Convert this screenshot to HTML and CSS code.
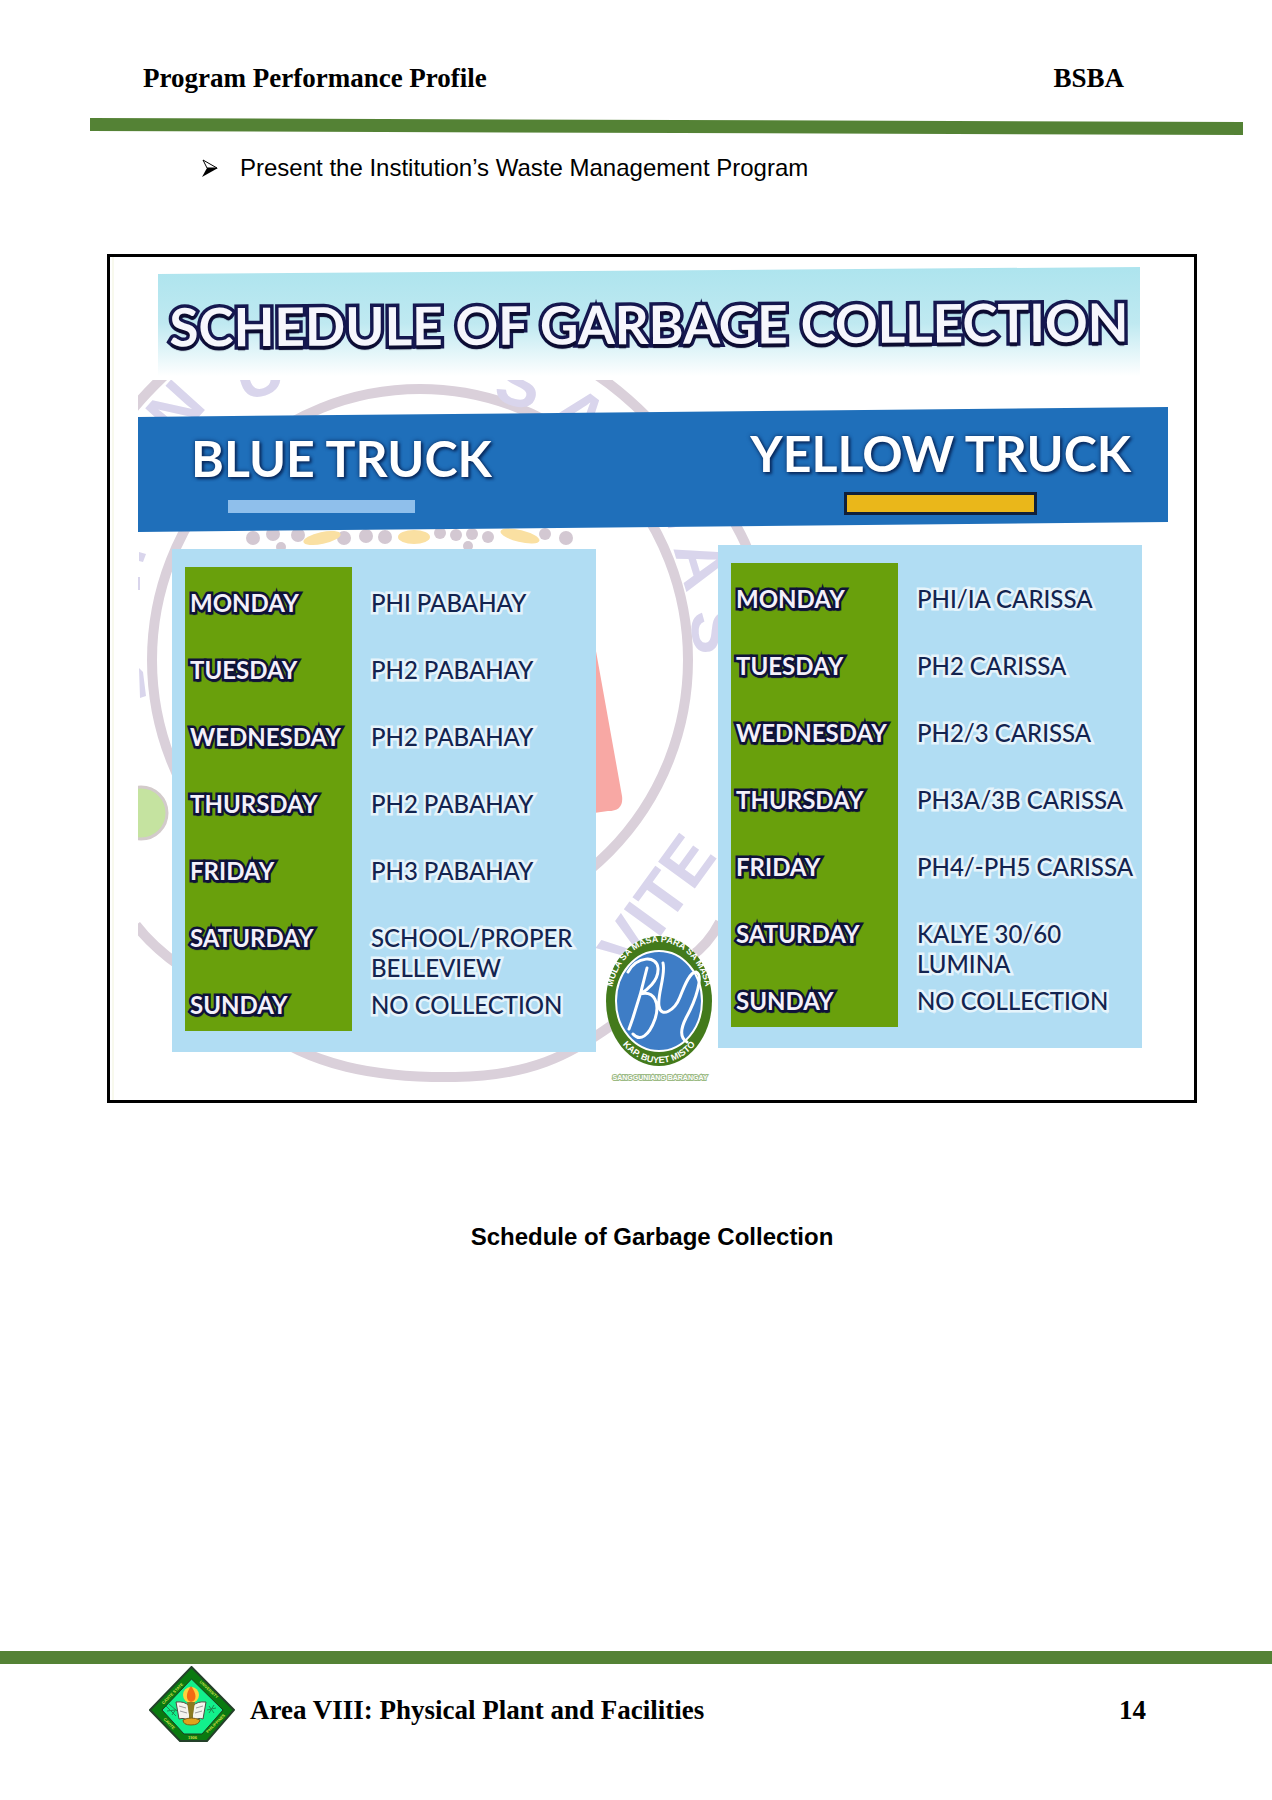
FILE: index.html
```html
<!DOCTYPE html>
<html lang="en">
<head>
<meta charset="utf-8">
<title>Program Performance Profile – BSBA</title>
<link rel="stylesheet" href="styles.css">
</head>
<body>
<header class="page-head">
  <span>Program Performance Profile</span>
  <span>BSBA</span>
</header>
<div class="head-rule"></div>

<main class="content">
  <ul class="topics">
    <li class="topic">
      <svg class="arrow" viewBox="0 0 16 18" aria-hidden="true"><path d="M1 1 15 9H5z" fill="#fff" stroke="#000" stroke-width="1"/><path d="M5 9H16L0 18z"/></svg>
      Present the Institution’s Waste Management Program
    </li>
  </ul>

  <figure class="figure">
    <div class="poster">
      <svg class="seal" viewBox="110 257 1084 843" preserveAspectRatio="none" aria-hidden="true">
        <defs>
          <clipPath id="art"><rect x="138" y="380" width="1030" height="710"/></clipPath>
          <path id="arcTop" d="M611 1001a48 59 0 0 1 96 0"/>
          <path id="arcBottom" d="M608 1001a51 62 0 0 0 102 0"/>
        </defs>
        <path d="M113 257V1100" stroke="#f1f3dc" stroke-width="1"/>
        <g clip-path="url(#art)">
          <g fill="none" stroke="#dad0da" stroke-width="10">
            <ellipse cx="420" cy="660" rx="268" ry="271"/>
            <path d="M128 415Q143 396 165 375M592 372Q618 388 648 418M730 515Q742 535 748 550M136 925Q152 946 180 966M250 1020C310 1068 380 1078 455 1077S570 1055 612 1025M690 957Q708 945 720 922"/>
          </g>
          <g class="seal-text">
            <text transform="translate(176 442) rotate(-48)">N</text>
            <text transform="translate(243 402) rotate(-18)">U</text>
            <text transform="translate(492 400) rotate(14)">S</text>
            <text transform="translate(548 418) rotate(38)">A</text>
            <text transform="translate(655 505) rotate(60)">V</text>
            <text transform="translate(673 548) rotate(73)">A</text>
            <text transform="translate(690 612) rotate(84)">S</text>
            <text transform="translate(632 975) rotate(-54)">VITE</text>
          </g>
          <path d="M139 552 146 554 143 562 139 561zM138 577H140V590H138zM139 668 143 672 146 696 140 698z" fill="#d9d5ec"/>
          <g fill="#d3c8d2">
            <circle cx="253" cy="538" r="7"/><circle cx="273" cy="534" r="7"/><circle cx="298" cy="535" r="7"/><circle cx="344" cy="538" r="7"/><circle cx="366" cy="536" r="7"/><circle cx="385" cy="537" r="7"/><circle cx="440" cy="533" r="6"/><circle cx="456" cy="535" r="6"/><circle cx="472" cy="534" r="6"/><circle cx="488" cy="537" r="6"/><circle cx="468" cy="546" r="5"/><circle cx="545" cy="534" r="6"/><circle cx="566" cy="538" r="7"/><circle cx="281" cy="547" r="5"/>
          </g>
          <g fill="#fae0a2">
            <ellipse cx="322" cy="538" rx="19" ry="6" transform="rotate(-12 322 538)"/><ellipse cx="414" cy="537" rx="16" ry="7"/><ellipse cx="520" cy="536" rx="20" ry="6" transform="rotate(14 520 536)"/>
          </g>
          <circle cx="141" cy="813" r="26" fill="#c5e3a0" stroke="#d3cbcb" stroke-width="3"/>
          <path d="M594 640 622 796Q624 811 608 811L594 813z" fill="#f8a8a4"/>
        </g>
        <ellipse cx="659" cy="1001" rx="53" ry="65" fill="#437a1b"/>
        <ellipse cx="659" cy="1001" rx="43" ry="50" fill="#3e7dc6" stroke="#fff" stroke-width="2"/>
        <path d="M647 968C642 990 636 1010 629 1029M628 972C637 956 657 955 658 968C659 981 646 991 640 994C655 990 660 1004 655 1019C649 1036 640 1042 633 1034M663 963C666 975 657 995 659 1006C661 1019 675 1010 680 997C685 984 690 972 696 972C704 975 696 1000 686 1018C680 1030 680 1038 687 1042" fill="none" stroke="#fff" stroke-width="3" stroke-linecap="round"/>
        <text class="ring-text"><textPath href="#arcTop" startOffset="50%" text-anchor="middle">MULA SA MASA PARA SA MASA</textPath></text>
        <text class="ring-text"><textPath href="#arcBottom" startOffset="50%" text-anchor="middle">KAP. BUYET MISTO</textPath></text>
        <text class="logo-caption" x="660" y="1080" text-anchor="middle">SANGGUNIANG BARANGAY</text>
      </svg>

      <h1 class="title"><span>SCHEDULE OF GARBAGE COLLECTION</span></h1>

      <div class="band">
        <h2 class="truck truck-blue">BLUE TRUCK</h2>
        <h2 class="truck truck-yellow">YELLOW TRUCK</h2>
      </div>

      <div class="panels">
        <table class="panel panel-low">
          <tbody>
            <tr><th scope="row">MONDAY</th><td>PHI PABAHAY</td></tr>
            <tr><th scope="row">TUESDAY</th><td>PH2 PABAHAY</td></tr>
            <tr><th scope="row">WEDNESDAY</th><td>PH2 PABAHAY</td></tr>
            <tr><th scope="row">THURSDAY</th><td>PH2 PABAHAY</td></tr>
            <tr><th scope="row">FRIDAY</th><td>PH3 PABAHAY</td></tr>
            <tr><th scope="row">SATURDAY</th><td>SCHOOL/PROPER<br>BELLEVIEW</td></tr>
            <tr><th scope="row">SUNDAY</th><td>NO COLLECTION</td></tr>
          </tbody>
        </table>
        <table class="panel">
          <tbody>
            <tr><th scope="row">MONDAY</th><td>PHI/IA CARISSA</td></tr>
            <tr><th scope="row">TUESDAY</th><td>PH2 CARISSA</td></tr>
            <tr><th scope="row">WEDNESDAY</th><td>PH2/3 CARISSA</td></tr>
            <tr><th scope="row">THURSDAY</th><td>PH3A/3B CARISSA</td></tr>
            <tr><th scope="row">FRIDAY</th><td>PH4/-PH5 CARISSA</td></tr>
            <tr><th scope="row">SATURDAY</th><td>KALYE 30/60<br>LUMINA</td></tr>
            <tr><th scope="row">SUNDAY</th><td>NO COLLECTION</td></tr>
          </tbody>
        </table>
      </div>
    </div>
    <figcaption class="caption">Schedule of Garbage Collection</figcaption>
  </figure>
</main>

<footer class="page-foot">
  <svg class="crest" viewBox="0 0 86 76" aria-hidden="true">
    <defs>
      <path id="e1" d="M11 42 42 11"/><path id="e2" d="M46 12 78 43"/><path id="e3" d="M10 49 32 72"/><path id="e4" d="M56 70 80 46"/>
    </defs>
    <path d="M42.500 1 85 44 58 75H31L1 44z" fill="#0a7a10" stroke="#24402a" stroke-width="2"/>
    <path d="M42.500 13 74 44 53 68H35L13 44z" fill="#12f08c" stroke="#1c3a20" stroke-width="1"/>
    <g class="crest-text">
      <text><textPath href="#e1" startOffset="5">CAVITE STATE</textPath></text>
      <text><textPath href="#e2" startOffset="6">UNIVERSITY</textPath></text>
      <text><textPath href="#e3" startOffset="6">CAVITE</textPath></text>
      <text><textPath href="#e4" startOffset="4">PHILIPPINES</textPath></text>
      <text x="39" y="73">1906</text>
    </g>
    <circle cx="42" cy="29" r="8" fill="#ffd23c"/>
    <path d="M42 20C36 28 37 35 42 36C48 35 48 28 42 20z" fill="#f26a14"/>
    <path d="M27 36Q36 35 40 40L41 56Q36 51 30 53zM57 36Q48 35 44 40L43 56Q49 51 54 53z" fill="#f4f4ee" stroke="#4c4c40" stroke-width="1"/>
    <path d="M30 40 37 42M31 45 38 47M47 42 54 40M46 47 53 45" stroke="#9a9a9a" stroke-width="1"/>
    <path d="M38 36H46L43 55H41z" fill="#8a7a20"/>
    <path d="M34 54Q42 50 51 54 50 59 42 59T34 54z" fill="#e0a21c" stroke="#806010" stroke-width="1"/>
    <path d="M17 40 27 50M20 38 28 45M18 45 26 44M23 49 27 43M58 44 67 42M60 40 65 47M65 39 60 47" stroke="#1d8a50" stroke-width="1" fill="none"/>
  </svg>
  <span>Area VIII: Physical Plant and Facilities</span>
  <span class="page-no">14</span>
</footer>
</body>
</html>
```
FILE: styles.css
```css
* { box-sizing: border-box; }

body {
  margin: 0;
  min-height: 100vh;
  display: flex;
  flex-direction: column;
  background: #fff;
  color: #000;
  font-family: "Liberation Sans", Arial, sans-serif;
  font-size: 24px;
  line-height: 32px;
}

.page-head {
  display: flex;
  justify-content: space-between;
  padding: 62px 148px 0 143px;
  font-family: "Palatino Linotype", "Liberation Serif", serif;
  font-size: 27px;
  font-weight: bold;
}

.head-rule {
  height: 17px;
  margin: 24px 29px 0 90px;
  background: #548235;
  clip-path: polygon(0 0, 100% 4px, 100% 100%, 0 13px);
}

.content {
  flex: 1;
  padding: 17px 75px 0 107px;
}

.topics {
  margin: 0;
  padding: 0 0 0 95px;
  list-style: none;
}

.topic {
  display: flex;
  align-items: center;
  gap: 22px;
}

.arrow {
  width: 16px;
  height: 18px;
}

.figure {
  margin: 70px 0 0;
}

.poster {
  position: relative;
  border: 3px solid #000;
  padding-bottom: 48px;
  font-family: Lato, sans-serif;
}

.seal {
  position: absolute;
  inset: 0;
  width: 100%;
  height: 100%;
}

.seal-text {
  fill: #d9d5ec;
  font: bold 66px "Liberation Sans", sans-serif;
}

.ring-text {
  fill: #fff;
  font: bold 9px "Liberation Sans", sans-serif;
}

.logo-caption {
  fill: #fff;
  stroke: #9cba84;
  stroke-width: 2px;
  paint-order: stroke;
  font: bold 7px "Liberation Sans", sans-serif;
}

.title {
  position: relative;
  height: 140px;
  margin: 10px 54px 0 48px;
  padding-top: 17px;
  background: linear-gradient(#ade4ee, #bfe9f1 40%, #fff0 78%);
  clip-path: polygon(0 7px, 100% 0, 100% 100%, 0 100%);
  color: #f6f6fc;
  font-size: 53px;
  line-height: 80px;
  text-align: center;
  white-space: nowrap;
  -webkit-text-stroke: 7px #15174f;
  paint-order: stroke fill;
  text-shadow: 0 4px 1px #0c0c30;
}

.title span {
  display: block;
  transform: rotate(-0.3deg);
}

.band {
  position: relative;
  display: flex;
  justify-content: space-between;
  align-items: flex-start;
  height: 125px;
  margin: 0 26px 0 28px;
  padding: 16px 37px 0 53px;
  background: #1f6fba;
  clip-path: polygon(0 10px, 100% 0, 100% 115px, 0 100%);
}

.truck {
  margin: 0;
  color: #fff;
  font-size: 50px;
  line-height: 60px;
  white-space: nowrap;
  text-shadow: 0 0 4px #0a2c60, 2px 2px 3px #0a2c60;
}

.truck::after {
  content: "";
  display: block;
  width: 187px;
}

.truck-blue {
  padding-top: 5px;
}

.truck-blue::after {
  height: 13px;
  margin: 12px 0 0 37px;
  background: #8fbfeb;
}

.truck-yellow::after {
  height: 17px;
  margin: 9px auto 0;
  border: 3px solid #10203a;
  background: #eab71a;
}

.panels {
  position: relative;
  display: grid;
  grid-template-columns: 1fr 1fr;
  gap: 122px;
  align-items: start;
  margin: 13px 52px 0 62px;
}

.panel {
  width: 100%;
  table-layout: fixed;
  border-collapse: separate;
  border-spacing: 0;
  padding: 18px 0 21px 13px;
  background: #b1ddf3;
  line-height: 30px;
  text-align: left;
  white-space: nowrap;
}

.panel-low {
  margin-top: 4px;
}

.panel th,
.panel td {
  height: 67px;
  padding: 5px 0 0 5px;
  vertical-align: top;
  font-size: 24px;
  -webkit-text-stroke: 5px #0f1238;
  paint-order: stroke fill;
}

.panel tr:first-child > * {
  height: 83px;
  padding-top: 21px;
}

.panel tr:last-child > * {
  height: 46px;
}

.panel th {
  width: 167px;
  background: #69a00c;
  color: #f4f0fa;
  text-shadow: 1px 3px 1px #10133a;
}

.panel td {
  padding-left: 19px;
  color: #132450;
  font-weight: 500;
  -webkit-text-stroke-color: #e6f4fb;
}

.caption {
  margin-top: 118px;
  text-align: center;
  font-weight: bold;
}

.page-foot {
  display: flex;
  align-items: flex-start;
  height: 149px;
  padding: 2px 126px 0 149px;
  border-top: 13px solid #548235;
  font-family: "Palatino Linotype", "Liberation Serif", serif;
  font-size: 27px;
  font-weight: bold;
  line-height: 88px;
}

.crest {
  width: 86px;
  height: 76px;
  margin-right: 15px;
}

.crest-text {
  fill: #d5e04a;
  font: bold 4px "Liberation Sans", sans-serif;
}

.page-no {
  margin-left: auto;
}
```
